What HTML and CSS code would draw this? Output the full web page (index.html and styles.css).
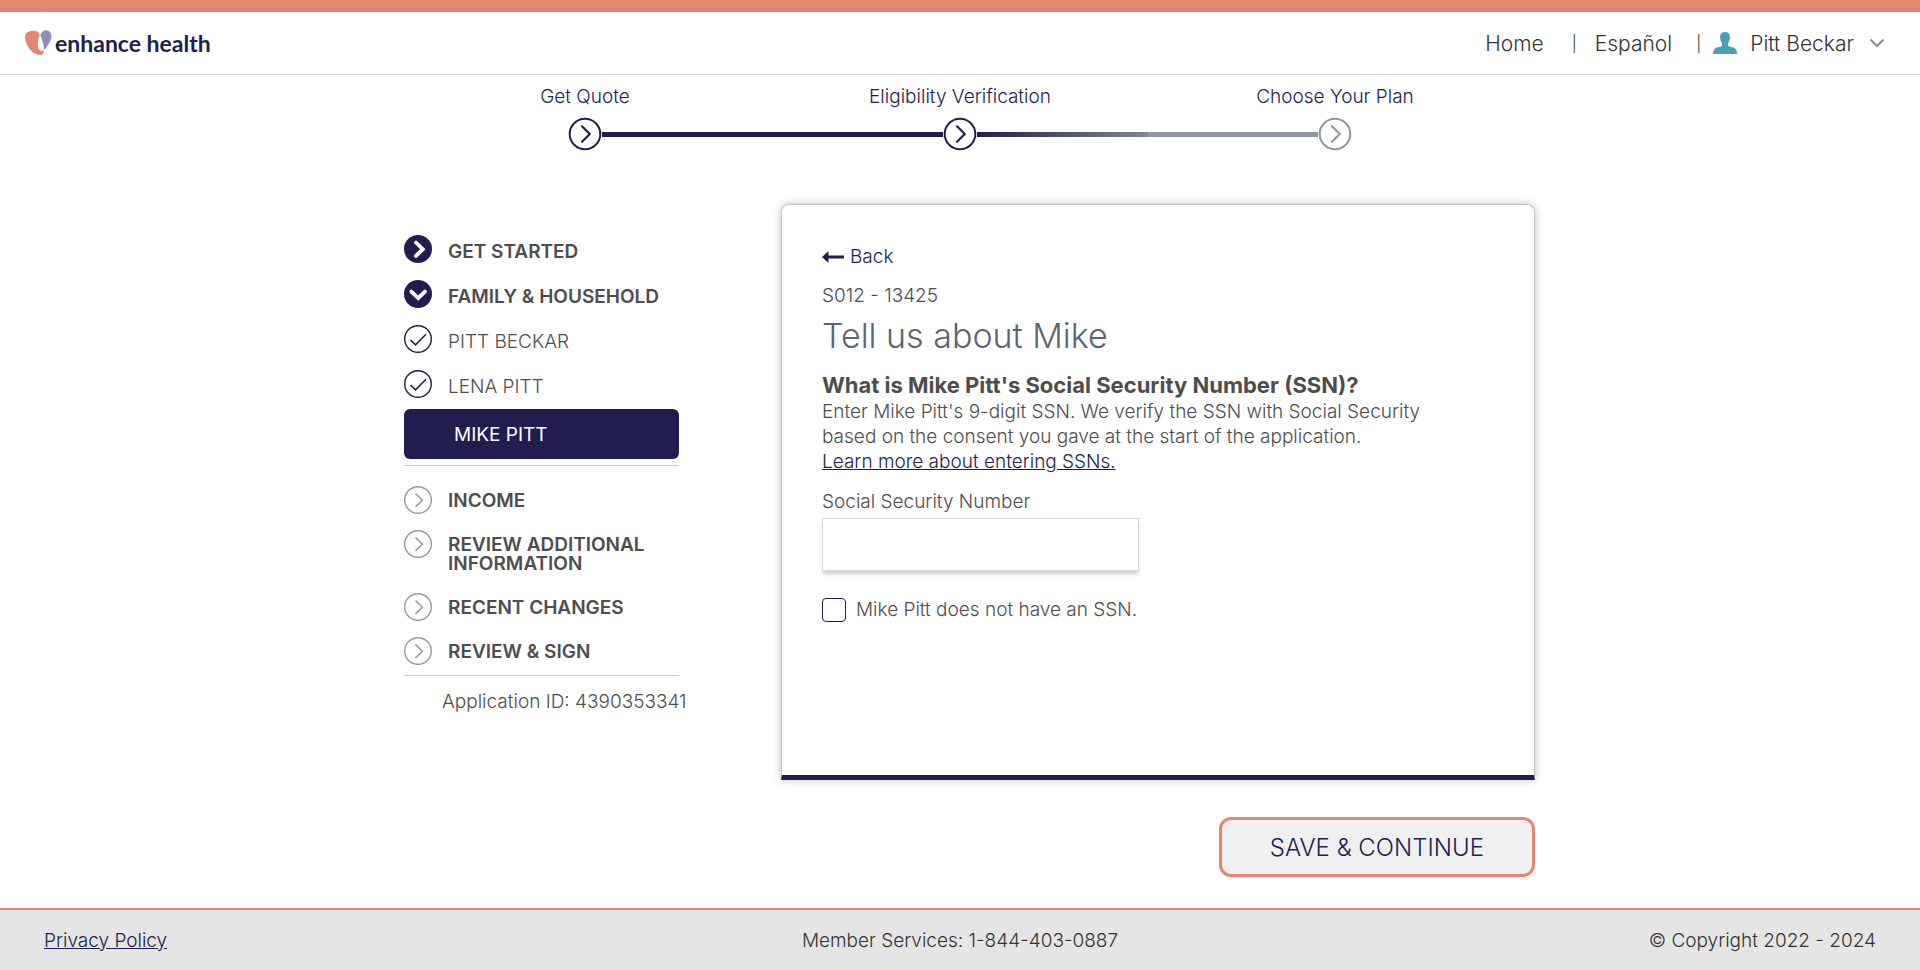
FILE: index.html
```
<!DOCTYPE html>
<html lang="en">
<head>
<meta charset="utf-8">
<meta name="viewport" content="width=device-width, initial-scale=1">
<title>Enhance Health</title>
<link rel="stylesheet" href="styles.css">
</head>
<body>
<svg class="sprite" aria-hidden="true">
  <symbol id="ring-right" viewBox="0 0 34 34"><circle cx="17" cy="17" r="15.3" fill="#fff" stroke="currentColor" stroke-width="2"/><path d="M14 9.3l7.8 7.7-7.8 7.7" fill="none" stroke="currentColor" stroke-width="2.2" stroke-linecap="round" stroke-linejoin="round"/></symbol>
  <symbol id="thin-right" viewBox="0 0 28 28"><circle cx="14" cy="14" r="13.3" fill="none" stroke="currentColor" stroke-width="1.4"/><path d="M11.5 7.5l6.8 6.7-6.8 6.7" fill="none" stroke="currentColor" stroke-width="1.5"/></symbol>
  <symbol id="thin-check" viewBox="0 0 28 28"><circle cx="14" cy="14" r="13.3" fill="none" stroke="currentColor" stroke-width="1.4"/><path d="M6.5 15l5 4.8L22 9.3" fill="none" stroke="currentColor" stroke-width="1.6"/></symbol>
  <symbol id="solid-right" viewBox="0 0 28 28"><circle cx="14" cy="14" r="14" fill="currentColor"/><path d="M12 7.5l6.8 6.7-6.8 6.7" fill="none" stroke="#fff" stroke-width="3.8" stroke-linecap="round" stroke-linejoin="miter"/></symbol>
  <symbol id="solid-down" viewBox="0 0 28 28"><circle cx="14" cy="14" r="14" fill="currentColor"/><path d="M7.3 11.6l6.9 6.6 6.8-6.6" fill="none" stroke="#fff" stroke-width="3.8" stroke-linecap="round" stroke-linejoin="miter"/></symbol>
</svg>

<header class="site-header">
  <a class="logo" href="#">
    <svg class="logo-mark" viewBox="0 0 27 26" aria-hidden="true">
      <path d="M7.200.800C10.700.300 14 1.500 14.600 5 14.300 7.500 12.800 9.500 12.800 13.500c0 4.500 1 7.200 3.600 7.300.9 0 1.600-.3 2.500-.9-.1 2.900-1.200 5.300-4 5.200C10.500 24.800 6 21.500 3.500 17.500 1.200 13.800 0 9.500.1 6.600.3 3 3.500 1.200 7.200.8z" fill="#e68672"/>
      <path d="M15.200 5.200C16.300 2.300 18.600.2 21.300.3c3 .2 5.300 2.600 5.200 6.200-.1 4.400-3.700 9.300-7.400 13.500C18.700 14.500 17.500 9.500 15.200 5.200z" fill="#8a90b7"/>
    </svg>
    <span>enhance health</span>
  </a>
  <nav class="top-nav" aria-label="Account">
    <a class="nav-home" href="#">Home</a>
    <span class="bar">|</span>
    <a class="nav-language" href="#">Español</a>
    <span class="bar">|</span>
    <button class="user" type="button">
      <svg class="user-icon" viewBox="0 0 24 22" aria-hidden="true"><path d="M12 0c3.200 0 4.900 1.800 4.900 5 0 2-.4 3.700-1.300 5.200-.5.900-.6 1.900-.6 2.900 0 1.200.8 1.500 3 2 4.200.8 6 2.400 6 6.900H0c0-4.500 1.800-6.100 6-6.900 2.200-.5 3-.8 3-2 0-1-.1-2-.6-2.900C7.500 8.700 7.100 7 7.100 5 7.100 1.800 8.800 0 12 0z" fill="#4a9fb8"/></svg>
      <span>Pitt Beckar</span>
      <svg class="user-caret" viewBox="0 0 16 10" aria-hidden="true"><path d="M1.500 1.500L8 8l6.500-6.500" fill="none" stroke="#888" stroke-width="2"/></svg>
    </button>
  </nav>
</header>

<ol class="stepper">
  <li class="step"><span>Get Quote</span>
    <div class="track"><i class="line"></i><svg class="step-icon"><use href="#ring-right"/></svg><i class="line done"></i></div></li>
  <li class="step"><span>Eligibility Verification</span>
    <div class="track"><i class="line done"></i><svg class="step-icon"><use href="#ring-right"/></svg><i class="line fade"></i></div></li>
  <li class="step"><span>Choose Your Plan</span>
    <div class="track"><i class="line todo"></i><svg class="step-icon pending"><use href="#ring-right"/></svg><i class="line"></i></div></li>
</ol>

<main class="layout">
  <aside class="sidebar">
    <ul class="section-list open">
      <li><a class="item section" href="#"><svg class="item-icon"><use href="#solid-right"/></svg><span>GET STARTED</span></a></li>
      <li><a class="item section" href="#"><svg class="item-icon"><use href="#solid-down"/></svg><span>FAMILY &amp; HOUSEHOLD</span></a></li>
      <li><a class="item" href="#"><svg class="item-icon"><use href="#thin-check"/></svg><span>PITT BECKAR</span></a></li>
      <li><a class="item" href="#"><svg class="item-icon"><use href="#thin-check"/></svg><span>LENA PITT</span></a></li>
    </ul>
    <a class="current" href="#" aria-current="page">MIKE PITT</a>
    <ul class="section-list upcoming">
      <li><a class="item section" href="#"><svg class="item-icon"><use href="#thin-right"/></svg><span>INCOME</span></a></li>
      <li><a class="item section" href="#"><svg class="item-icon"><use href="#thin-right"/></svg><span>REVIEW ADDITIONAL INFORMATION</span></a></li>
      <li><a class="item section" href="#"><svg class="item-icon"><use href="#thin-right"/></svg><span>RECENT CHANGES</span></a></li>
      <li><a class="item section" href="#"><svg class="item-icon"><use href="#thin-right"/></svg><span>REVIEW &amp; SIGN</span></a></li>
    </ul>
    <p class="app-id">Application ID: 4390353341</p>
  </aside>

  <form class="content">
    <section class="card">
      <a class="back" href="#"><svg class="back-icon" viewBox="0 0 22 12" aria-hidden="true"><path d="M0 6l6.500-6v4.500H22v3H6.500V12z" fill="currentColor"/></svg>Back</a>
      <p class="code">S012 - 13425</p>
      <h1 class="title">Tell us about Mike</h1>
      <h2 class="question">What is Mike Pitt's Social Security Number (SSN)?</h2>
      <p class="help">Enter Mike Pitt's 9-digit SSN. We verify the SSN with Social Security based on the consent you gave at the start of the application.</p>
      <a class="learn" href="#">Learn more about entering SSNs.</a>
      <label class="field-label" for="ssn">Social Security Number</label>
      <input class="field" id="ssn" type="text" autocomplete="off">
      <div class="check">
        <input class="check-box" id="no-ssn" type="checkbox">
        <label for="no-ssn">Mike Pitt does not have an SSN.</label>
      </div>
    </section>
    <button class="save" type="submit">SAVE &amp; CONTINUE</button>
  </form>
</main>

<footer class="site-footer">
  <a href="#">Privacy Policy</a>
  <span>Member Services: 1-844-403-0887</span>
  <span class="copyright">© Copyright 2022 - 2024</span>
</footer>
</body>
</html>
```
FILE: styles.css
```
:root {
  --navy: #211e4f;
  --coral: #e68672;
  --text: #4d4d4d;
  --rule: #ccc;
}

* { box-sizing: border-box; }

body {
  margin: 0;
  min-height: 100vh;
  display: flex;
  flex-direction: column;
  background: #fff;
  color: var(--text);
  font-family: Inter, "Open Sans", sans-serif;
  font-size: 19px;
  font-weight: 300;
  line-height: 25px;
}

a { color: inherit; text-decoration: none; }
p, h1, h2, ul, ol { margin: 0; padding: 0; }
ul, ol { list-style: none; }
button, input { font: inherit; color: inherit; }
.sprite { position: absolute; width: 0; height: 0; }

.site-header {
  display: flex;
  justify-content: space-between;
  align-items: center;
  height: 75px;
  padding: 0 35px 0 25px;
  border-top: 12px solid var(--coral);
  border-bottom: 1px solid #d4d4d4;
  color: #333;
}

.logo {
  display: flex;
  align-items: center;
  gap: 3px;
  color: var(--navy);
  font-family: Lato, sans-serif;
  font-size: 23px;
  font-weight: 700;
}
.logo-mark { width: 27px; height: 26px; }

.top-nav { display: flex; align-items: center; font-size: 21px; }
.bar { font-size: 16px; }
.nav-home { padding-right: 28px; }
.nav-language { padding: 0 24px 0 18px; }
.user {
  display: flex;
  align-items: center;
  padding: 0 0 0 12px;
  border: 0;
  background: none;
  cursor: pointer;
}
.user-icon { width: 24px; height: 22px; margin-right: 13px; }
.user-caret { width: 16px; height: 10px; margin-left: 15px; }

.stepper {
  display: grid;
  grid-template-columns: repeat(3, 1fr);
  width: 100%;
  max-width: 1125px;
  margin: 0 auto;
  padding-top: 9px;
  color: var(--navy);
}
.step { text-align: center; }
.track { display: flex; align-items: center; padding-top: 8px; }
.step-icon { width: 34px; height: 34px; flex: none; }
.pending { color: #8e98a5; }
.line { flex: 1; height: 5px; }
.done { background: var(--navy); }
.fade { background: linear-gradient(90deg, #211e4f, #808590); }
.todo { background: #8e98a5; }

.layout {
  display: grid;
  grid-template-columns: 275px minmax(0, 1fr);
  column-gap: 102px;
  width: 100%;
  max-width: 1170px;
  margin: 0 auto;
  padding: 53px 10px 31px 29px;
}

.sidebar { padding-top: 31px; }
.section-list { display: flex; flex-direction: column; }
.item { display: flex; gap: 16px; line-height: 19px; }
.item span { padding: 5px 0 4px; }
.item-icon { width: 28px; height: 28px; flex: none; color: var(--navy); }
.section { font-weight: 600; }
.open { gap: 17px; padding-bottom: 11px; }
.open .item { height: 28px; }
.open .item span { padding-top: 7px; }
.current {
  display: block;
  padding: 13px 50px 12px;
  border-radius: 6px;
  background: var(--navy);
  color: #fff;
  font-weight: 400;
}
.upcoming {
  gap: 16px;
  margin-top: 6px;
  padding: 20px 0 10px;
  border-top: 1px solid var(--rule);
  border-bottom: 1px solid var(--rule);
}
.upcoming .item-icon { color: #999; }
.app-id { padding: 13px 0 0 38px; white-space: nowrap; }

.content { display: flex; flex-direction: column; }
.card {
  display: flex;
  flex-direction: column;
  align-items: flex-start;
  min-height: 576px;
  padding: 39px 80px 40px 40px;
  border: 1px solid #c4c4c4;
  border-bottom: 5px solid var(--navy);
  border-radius: 8px 8px 0 0;
  box-shadow: 0 0 8px rgba(0, 0, 0, .25);
}
.back { display: flex; align-items: center; gap: 6px; color: var(--navy); }
.back-icon { width: 22px; height: 12px; }
.code { padding-top: 14px; }
.title {
  padding-top: 8px;
  color: #5b6470;
  font-size: 34px;
  font-weight: 300;
  line-height: 40px;
}
.question { padding-top: 17px; font-size: 22px; font-weight: 700; }
.help { padding-top: 1px; }
.learn { color: var(--navy); text-decoration: underline; }
.field-label { padding-top: 15px; }
.field {
  width: 317px;
  max-width: 100%;
  height: 53px;
  margin-top: 4px;
  padding: 0 12px;
  border: 1px solid #d6d9d9;
  border-radius: 0;
  background: #fff;
  box-shadow: 0 4px 4px -1px rgba(0, 0, 0, .2);
}
.check { display: flex; align-items: center; gap: 10px; margin-top: 26px; }
.check-box {
  appearance: none;
  width: 24px;
  height: 24px;
  margin: 0;
  border: 1px solid var(--navy);
  border-radius: 4px;
  background: #fff;
}
.check-box:checked { background: var(--navy); }

.save {
  align-self: flex-end;
  margin-top: 37px;
  padding: 15px 48px 14px;
  border: 3px solid var(--coral);
  border-radius: 12px;
  background: #f0f0f0;
  color: var(--navy);
  font-size: 24px;
  cursor: pointer;
}

.site-footer {
  display: grid;
  grid-template-columns: 1fr auto 1fr;
  align-items: center;
  margin-top: auto;
  padding: 18px 44px 17px;
  border-top: 2px solid var(--coral);
  background: #e5e5e5;
  color: #333;
}
.site-footer a { justify-self: start; color: var(--navy); text-decoration: underline; }
.copyright { text-align: right; }
```
